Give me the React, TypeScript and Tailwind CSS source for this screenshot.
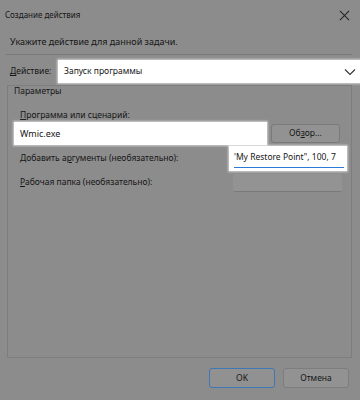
import React from "react";

const App = () => {
  return (
    <div
      className="w-[360px] h-[400px] bg-[#8c8c8c] text-[#161616] text-[8.5px] leading-none overflow-hidden flex flex-col"
      style={{ fontFamily: '"Noto Sans", "Open Sans", sans-serif' }}
    >
      {/* title bar */}
      <div className="h-[28px] flex items-center justify-between pl-[5px] pr-[10px] border-t-2 border-[#8c8c8c]">
        <span className="text-[8px]">Создание действия</span>
        <svg width="11" height="11" viewBox="0 0 12 12" className="text-[#222]">
          <path d="M1 1L11 11M11 1L1 11" stroke="currentColor" strokeWidth="1.1" />
        </svg>
      </div>

      <div className="h-[26px] flex items-center pl-[10px] text-[9px]">Укажите действие для данной задачи.</div>
      <div className="ml-[6px] mr-[8px] h-px bg-[#787878]" />

      {/* action */}
      <div className="mt-[5px] flex items-center">
        <span className="w-[48px] ml-[10px]">
          <span className="underline">Д</span>ействие:
        </span>
        <div className="flex-1 h-[23px] bg-white flex items-center justify-between pl-[6px] pr-[4px] shadow-[0_0_2px_1px_rgba(255,255,255,0.6)]">
          <span>Запуск программы</span>
          <svg width="12" height="8" viewBox="0 0 12 8">
            <path d="M1 1.5L6 6.5L11 1.5" stroke="#333" strokeWidth="1.1" fill="none" />
          </svg>
        </div>
      </div>

      {/* group box */}
      <div className="mt-[2px] ml-[7px] mr-[8px] h-[273px] border border-[#7e7e7e] flex flex-col">
        <div className="h-[11px] flex items-center ml-[6px]">Параметры</div>
        <div className="mt-[13px] h-[10px] flex items-center ml-[12px]">
          <span className="underline">П</span>рограмма или сценарий:
        </div>
        <div className="mt-[2px] flex items-center h-[23px]">
          <div className="ml-[6px] w-[253px] h-[23px] bg-white flex items-center pl-[6px] text-[9px] shadow-[0_0_2px_1px_rgba(255,255,255,0.6)]">
            Wmic.exe
          </div>
          <div className="ml-[4px] w-[69px] h-[19px] rounded-[3px] border border-[#7a7a7a] bg-[#929292] flex items-center justify-center">
            Об<span className="underline">з</span>ор...
          </div>
        </div>
        <div className="mt-[1px] flex items-center h-[25px]">
          <span className="ml-[12px] whitespace-nowrap">
            Добавить а<span className="underline">р</span>гументы (необязательно):
          </span>
          <div className="ml-auto mr-[4px] w-[118px] h-[25px] bg-white flex flex-col justify-end pl-[5px] shadow-[0_0_2px_1px_rgba(255,255,255,0.6)]">
            <span className="whitespace-nowrap overflow-hidden text-[8.5px] leading-[12px]">'My Restore Point", 100, 7</span>
            <div className="mt-[4px] mb-[3px] mr-[3px] h-px bg-[#2b7bd6]" />
          </div>
        </div>
        <div className="mt-[2px] flex items-center h-[19px]">
          <span className="ml-[12px] whitespace-nowrap">
            <span className="underline">Р</span>абочая папка (необязательно):
          </span>
          <div className="ml-auto mr-[9px] w-[109px] h-[18px] bg-[#939393] border-b border-[#7a7a7a] rounded-[2px]" />
        </div>
      </div>

      {/* buttons */}
      <div className="mt-[10px] flex justify-end gap-[8px] pr-[11px]">
        <div className="w-[66px] h-[20px] rounded-[3px] border border-[#3f77b5] bg-[#919191] flex items-center justify-center">
          OK
        </div>
        <div className="w-[66px] h-[20px] rounded-[3px] border border-[#7d7d7d] bg-[#929292] flex items-center justify-center">
          Отмена
        </div>
      </div>
    </div>
  );
};

export default App;
